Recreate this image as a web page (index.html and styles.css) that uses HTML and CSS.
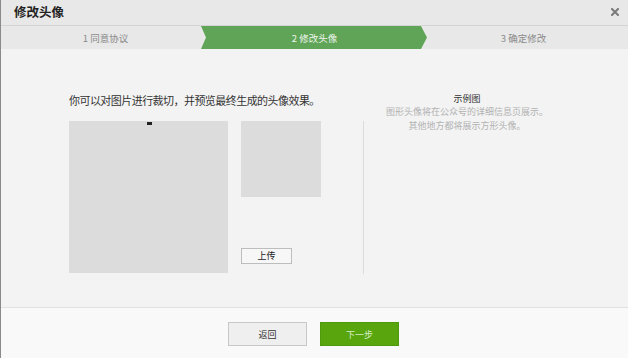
FILE: index.html
```html
<!DOCTYPE html>
<html lang="zh-CN">
<head>
<meta charset="utf-8">
<title>修改头像</title>
<link rel="stylesheet" href="styles.css">
</head>
<body>
<div class="dialog">
  <div class="header">
    <h1 class="title">修改头像</h1>
    <svg class="close" width="8" height="8" viewBox="0 0 8 8"><path d="M1 1L7 7M7 1L1 7" stroke="#7a7a7a" stroke-width="2" stroke-linecap="square"/></svg>
  </div>
  <div class="steps">
    <div class="step">1 同意协议</div>
    <div class="step active"><span>2 修改头像</span></div>
    <div class="step">3 确定修改</div>
  </div>
  <div class="main">
    <div class="editor">
      <p class="hint">你可以对图片进行裁切，并预览最终生成的头像效果。</p>
      <div class="crop-row">
        <div class="crop-box"><span class="handle"></span></div>
        <div class="preview-col">
          <div class="preview"></div>
          <button class="upload">上传</button>
        </div>
      </div>
    </div>
    <div class="example">
      <div class="example-title">示例图</div>
      <div class="example-desc">图形头像将在公众号的详细信息页展示。<br>其他地方都将展示方形头像。</div>
    </div>
  </div>
  <div class="footer">
    <button class="btn btn-back">返回</button>
    <button class="btn btn-next">下一步</button>
  </div>
</div>
</body>
</html>
```
FILE: styles.css
```css
* { box-sizing: border-box; }
html, body { margin: 0; padding: 0; }
body {
  width: 628px;
  height: 358px;
  overflow: hidden;
  font-family: "Noto Sans CJK SC", "Noto Sans", sans-serif;
  background: #f9f9f9;
}
.dialog {
  width: 628px;
  height: 358px;
  border-left: 1px solid #8a8a8a;
  display: flex;
  flex-direction: column;
}
.header {
  height: 26px;
  flex: none;
  background: #e8e8e8;
  border-bottom: 1px solid #d4d4d4;
  display: flex;
  align-items: center;
  justify-content: space-between;
  padding: 0 9px 1px 13px;
}
.title {
  margin: 0;
  font-size: 12.5px;
  font-weight: bold;
  color: #222;
  line-height: 14px;
}
.close { display: block; }
.steps {
  height: 23px;
  flex: none;
  background: #e8e8e8;
  display: grid;
  grid-template-columns: 1fr 1fr 1fr;
}
.step {
  position: relative;
  display: flex;
  align-items: center;
  justify-content: center;
  font-size: 9.5px;
  color: #8a8a8a;
}
.step.active { color: #eef6ec; }
.step.active span { position: relative; }
.step.active::before {
  content: "";
  position: absolute;
  top: 0;
  bottom: 0;
  left: -9px;
  right: -8px;
  background: #60a457;
  clip-path: polygon(0 0, 220px 0, 226px 50%, 220px 100%, 0 100%, 5px 50%);
}
.main {
  flex: 1;
  background: #f3f3f3;
  display: flex;
  align-items: flex-start;
  padding-left: 68px;
}
.editor {
  padding-top: 45px;
  width: 295px;
}
.hint {
  margin: 0 0 14px;
  font-size: 11px;
  line-height: 13px;
  letter-spacing: -0.55px;
  color: #333;
  white-space: nowrap;
}
.crop-row {
  display: flex;
  gap: 13px;
  height: 153px;
  border-right: 1px solid #dcdcdc;
}
.crop-box {
  position: relative;
  width: 159px;
  height: 152px;
  background: #dcdcdc;
}
.handle {
  position: absolute;
  left: 78px;
  top: 1px;
  width: 5px;
  height: 3px;
  background: #222;
}
.preview-col {
  display: flex;
  flex-direction: column;
  align-items: flex-start;
}
.preview {
  width: 80px;
  height: 76px;
  background: #dcdcdc;
}
.upload {
  margin-top: 51px;
  width: 51px;
  height: 16px;
  padding: 0;
  border: 1px solid #bdbdbd;
  background: #f7f7f7;
  font-family: inherit;
  font-size: 9px;
  line-height: 14px;
  color: #222;
}
.example {
  width: 206px;
  padding-top: 43px;
  text-align: center;
}
.example-title {
  font-size: 9px;
  line-height: 13px;
  color: #333;
}
.example-desc {
  font-size: 9px;
  line-height: 13.5px;
  color: #b2b2b2;
}
.footer {
  height: 51px;
  flex: none;
  border-top: 1px solid #e2e2e2;
  background: #f9f9f9;
  display: flex;
  justify-content: center;
  align-items: flex-start;
  gap: 13px;
  padding-top: 14px;
  padding-right: 2px;
}
.btn {
  width: 79px;
  height: 24px;
  padding: 0;
  font-family: inherit;
  font-size: 9px;
}
.btn-back {
  background: #efefef;
  border: 1px solid #c8c8c8;
  color: #333;
}
.btn-next {
  background: #58a50d;
  border: 1px solid #4f9a0a;
  color: #d6edc4;
}
```
